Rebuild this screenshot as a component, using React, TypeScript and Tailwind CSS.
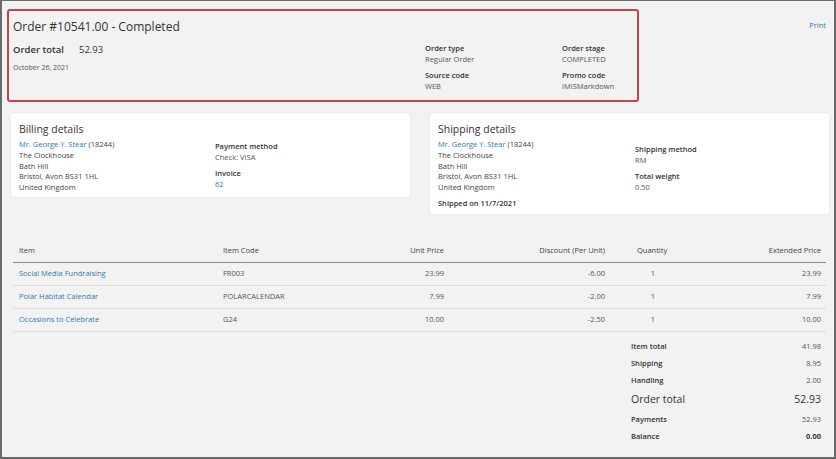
import React from 'react';

// 注文詳細の表示 (Order detail)
const items = [
  { name: 'Social Media Fundraising', code: 'FR003', unit: '23.99', discount: '-6.00', qty: '1', ext: '23.99' },
  { name: 'Polar Habitat Calendar', code: 'POLARCALENDAR', unit: '7.99', discount: '-2.00', qty: '1', ext: '7.99' },
  { name: 'Occasions to Celebrate', code: 'G24', unit: '10.00', discount: '-2.50', qty: '1', ext: '10.00' },
];

const Field = ({ label, value, link }: { label: string; value: string; link?: boolean }) => (
  <div className="leading-[10.5px]">
    <div className="font-semibold text-[#333]">{label}</div>
    <div className={link ? 'text-[#2b7cab]' : 'text-[#555]'}>{value}</div>
  </div>
);

const Address = () => (
  <div className="mt-[3px] leading-[10.8px] text-[#444]">
    <div>
      <span className="text-[#2b7cab]">Mr. George Y. Stear</span> (18244)
    </div>
    <div>The Clockhouse</div>
    <div>Bath Hill</div>
    <div>Bristol, Avon BS31 1HL</div>
    <div>United Kingdom</div>
  </div>
);

export default function App() {
  return (
    <div
      className="w-[836px] h-[459px] box-border border-l-2 border-t border-r-2 border-b-2 border-[#6a6a6a] bg-[#f2f2f2] text-[7.5px] text-[#444] overflow-hidden"
      style={{ fontFamily: '"Open Sans", "Noto Sans", sans-serif' }}
    >
      {/* 上部: 注文ヘッダー */}
      <div className="flex items-start pt-[8px] pl-[5px] pr-[8px]">
        <div className="w-[632px] h-[93px] shrink-0 box-border border-2 border-[#c2434d] rounded-[3px] flex pl-[4px]">
          <div className="w-[412px] shrink-0 pt-[7px]">
            <div className="text-[12px] text-[#333] leading-[18px]">Order #10541.00 - Completed</div>
            <div className="flex items-baseline mt-[7px] text-[9.5px] leading-[14px] text-[#333]">
              <span className="font-semibold w-[66px]">Order total</span>
              <span>52.93</span>
            </div>
            <div className="mt-[6px] text-[7px] text-[#555]">October 26, 2021</div>
          </div>
          <div className="grid grid-cols-[137px_70px] gap-y-[6px] content-start pt-[32px]">
            <Field label="Order type" value="Regular Order" />
            <Field label="Order stage" value="COMPLETED" />
            <Field label="Source code" value="WEB" />
            <Field label="Promo code" value="iMISMarkdown" />
          </div>
        </div>
        <div className="ml-auto mt-[11px] text-[#2b7cab] text-[7.5px]">Print</div>
      </div>

      {/* 請求・配送カード */}
      <div className="flex items-start gap-[20px] pl-[9px] mt-[11px]">
        <div className="w-[399px] h-[84px] bg-white rounded-[3px] shadow-[0_0_2px_rgba(0,0,0,0.08)] box-border pl-[8px] pt-[9px] flex">
          <div className="w-[196px]">
            <div className="text-[10.5px] text-[#333] leading-[14px]">Billing details</div>
            <Address />
          </div>
          <div className="pt-[19px] flex flex-col gap-[6px]">
            <Field label="Payment method" value="Check: VISA" />
            <Field label="Invoice" value="62" link />
          </div>
        </div>
        <div className="w-[399px] h-[101px] bg-white rounded-[3px] shadow-[0_0_2px_rgba(0,0,0,0.08)] box-border pl-[8px] pt-[9px] flex">
          <div className="w-[197px]">
            <div className="text-[10.5px] text-[#333] leading-[14px]">Shipping details</div>
            <Address />
            <div className="mt-[5px] font-semibold text-[#333]">Shipped on 11/7/2021</div>
          </div>
          <div className="pt-[22px] flex flex-col gap-[6px]">
            <Field label="Shipping method" value="RM" />
            <Field label="Total weight" value="0.50" />
          </div>
        </div>
      </div>

      {/* 明細テーブル */}
      <table className="ml-[11px] mt-[22px] w-[813px] table-fixed border-collapse">
        <colgroup>
          <col className="w-[204px]" />
          <col className="w-[133px]" />
          <col className="w-[100px]" />
          <col className="w-[161px]" />
          <col className="w-[84px]" />
          <col className="w-[131px]" />
        </colgroup>
        <thead>
          <tr className="h-[26px] border-b border-[#8a8a8a] text-[#444]">
            <th className="font-normal text-left pl-[6px] pt-[4px]">Item</th>
            <th className="font-normal text-left pl-[6px] pt-[4px]">Item Code</th>
            <th className="font-normal text-right pr-[6px] pt-[4px]">Unit Price</th>
            <th className="font-normal text-right pr-[6px] pt-[4px]">Discount (Per Unit)</th>
            <th className="font-normal text-left pl-[26px] pt-[4px]">Quantity</th>
            <th className="font-normal text-right pr-[5px] pt-[4px]">Extended Price</th>
          </tr>
        </thead>
        <tbody>
          {items.map((it) => (
            <tr key={it.code} className="h-[23px] border-b border-[#dcdcdc] text-[#555]">
              <td className="pl-[6px] text-[#2b7cab]">{it.name}</td>
              <td className="pl-[6px]">{it.code}</td>
              <td className="text-right pr-[6px]">{it.unit}</td>
              <td className="text-right pr-[6px]">{it.discount}</td>
              <td className="text-center">{it.qty}</td>
              <td className="text-right pr-[5px]">{it.ext}</td>
            </tr>
          ))}
        </tbody>
      </table>

      {/* 合計 */}
      <div className="ml-[629px] w-[190px] mt-[7px] text-[#555]">
        <div className="flex justify-between h-[17px] items-center">
          <span className="font-semibold text-[#333]">Item total</span>
          <span>41.98</span>
        </div>
        <div className="flex justify-between h-[17px] items-center">
          <span className="font-semibold text-[#333]">Shipping</span>
          <span>8.95</span>
        </div>
        <div className="flex justify-between h-[17px] items-center">
          <span className="font-semibold text-[#333]">Handling</span>
          <span>2.00</span>
        </div>
        <div className="flex justify-between h-[21px] items-center text-[10.5px] text-[#333]">
          <span className="font-medium">Order total</span>
          <span>52.93</span>
        </div>
        <div className="flex justify-between h-[18px] items-center">
          <span className="font-semibold text-[#333]">Payments</span>
          <span>52.93</span>
        </div>
        <div className="flex justify-between h-[17px] items-center">
          <span className="font-semibold text-[#333]">Balance</span>
          <span className="font-bold text-[#333]">0.00</span>
        </div>
      </div>
    </div>
  );
}
